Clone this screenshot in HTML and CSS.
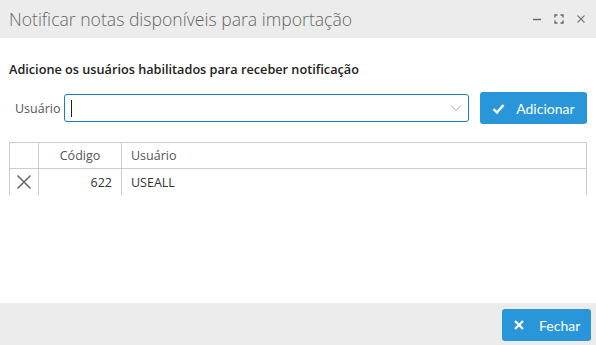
FILE: index.html
```html
<!DOCTYPE html>
<html>
<head>
    <meta charset="UTF-8">
    <title>Notificar notas</title>
    <link rel="stylesheet" href="styles.css">
</head>
<body>
    <div class="dialog">
        <div class="titlebar">
            <span class="title">Notificar notas disponíveis para importação</span>
            <div class="win-actions">
                <svg width="10" height="10" viewBox="0 0 10 10"><path d="M1 5.5h8" stroke="#666" stroke-width="1.4"/></svg>
                <svg width="10" height="10" viewBox="0 0 10 10" fill="none" stroke="#666" stroke-width="1.4"><path d="M1 3.5V1h2.5M6.5 1H9v2.5M9 6.5V9H6.5M3.5 9H1V6.5"/></svg>
                <svg width="10" height="10" viewBox="0 0 10 10"><path d="M1.5 1.5l7 7M8.5 1.5l-7 7" stroke="#777" stroke-width="1.1"/></svg>
            </div>
        </div>

        <div class="content">
            <h4 class="section-title">Adicione os usuários habilitados para receber notificação</h4>

            <div class="form-row">
                <label class="field-label">Usuário</label>
                <div class="select-box">
                    <span class="caret"></span>
                    <svg class="chevron" width="12" height="8" viewBox="0 0 12 8"><path d="M1 1.5l5 5 5-5" fill="none" stroke="#aaa" stroke-width="1"/></svg>
                </div>
                <button class="btn btn-add">
                    <svg width="13" height="11" viewBox="0 0 13 11"><path d="M1.5 6l3.5 3.5L11.5 2" fill="none" stroke="#fff" stroke-width="2.4"/></svg>
                    Adicionar
                </button>
            </div>

            <table class="grid">
                <thead>
                    <tr>
                        <th class="col-action"></th>
                        <th class="col-code">Código</th>
                        <th>Usuário</th>
                    </tr>
                </thead>
                <tbody>
                    <tr>
                        <td class="col-action">
                            <svg width="16" height="16" viewBox="0 0 16 16"><path d="M1.5 1.5l13 13M14.5 1.5l-13 13" stroke="#666" stroke-width="1.5"/></svg>
                        </td>
                        <td class="col-code">622</td>
                        <td>USEALL</td>
                    </tr>
                </tbody>
            </table>
        </div>

        <div class="footer">
            <button class="btn btn-close">
                <svg width="10" height="10" viewBox="0 0 10 10"><path d="M1 1l8 8M9 1l-8 8" stroke="#fff" stroke-width="2.2"/></svg>
                Fechar
            </button>
        </div>
    </div>
</body>
</html>
```

FILE: styles.css
```css
body {
    margin: 0;
    font-family: "Open Sans", "Noto Sans", sans-serif;
    background: #fff;
}

.dialog {
    width: 596px;
    height: 345px;
    display: flex;
    flex-direction: column;
}

.titlebar {
    height: 38px;
    background: #ececec;
    display: flex;
    align-items: center;
    justify-content: space-between;
    padding: 0 10px 0 9px;
}

.title {
    font-size: 17.6px;
    color: #666;
    font-weight: 300;
}

.win-actions {
    display: flex;
    gap: 12px;
    align-items: center;
}

.content {
    flex: 1;
    padding: 0 9px;
}

.section-title {
    margin: 22px 0 0 0;
    font-size: 12.7px;
    font-weight: 600;
    color: #222;
    line-height: 18px;
}

.form-row {
    display: flex;
    align-items: center;
    margin-top: 14px;
}

.field-label {
    font-size: 12.5px;
    color: #555;
    margin-left: 6px;
    width: 49px;
}

.select-box {
    width: 406px;
    height: 28px;
    border: 1px solid #1a7fc9;
    border-radius: 3px;
    display: flex;
    align-items: center;
    justify-content: space-between;
    padding: 0 6px 0 6px;
    box-sizing: border-box;
}

.caret {
    width: 1px;
    height: 17px;
    background: #222;
}

.btn {
    border: none;
    border-radius: 3px;
    background: #2a96da;
    color: #fff;
    font-family: Lato, sans-serif;
    font-size: 14px;
    display: flex;
    align-items: center;
    cursor: pointer;
}

.btn-add {
    margin-left: 11px;
    width: 107px;
    height: 32px;
    padding: 0 0 0 12px;
    gap: 11px;
}

.grid {
    width: 100%;
    margin-top: 18px;
    border-collapse: collapse;
    font-size: 12.5px;
    color: #333;
}

.grid th {
    font-weight: normal;
    color: #555;
    height: 25px;
    text-align: left;
    padding: 0 9px;
    border: 1px solid #ccc;
}

.grid td {
    height: 26px;
    padding: 0 9px;
    border-left: 1px solid #ccc;
    border-right: 1px solid #ccc;
}

.grid .col-action {
    width: 11px;
    padding: 0 6px;
}

.grid td.col-action svg {
    display: block;
}

.grid th.col-code {
    width: 64px;
    text-align: center;
}

.grid td.col-code {
    text-align: right;
}

.footer {
    height: 42px;
    background: #ececec;
    display: flex;
    justify-content: flex-end;
    align-items: flex-start;
    padding: 6px 5px 0 0;
    box-sizing: border-box;
}

.btn-close {
    width: 89px;
    height: 32px;
    padding: 0 0 0 12px;
    gap: 15px;
}
```
